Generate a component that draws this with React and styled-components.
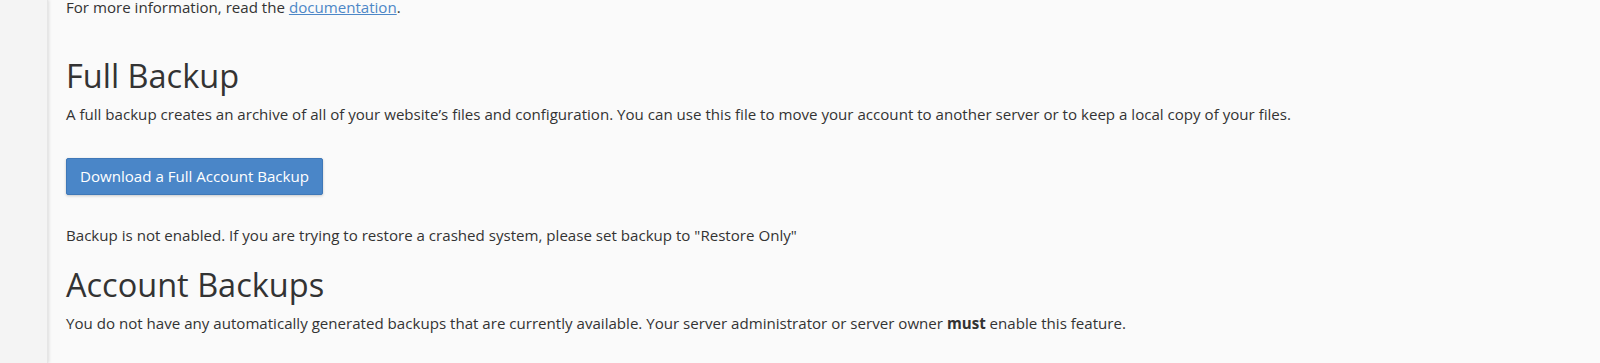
import React from 'react';
import styled, { createGlobalStyle } from 'styled-components';

const GlobalStyle = createGlobalStyle`
  html, body {
    margin: 0;
    padding: 0;
    background: #fafafa;
    font-family: "Open Sans", "Liberation Sans", sans-serif;
    font-size: 15.1px;
    color: #333;
  }
`;

const Layout = styled.div`
  display: flex;
  min-height: 363px;
  overflow: hidden;
`;

const Sidebar = styled.div`
  width: 47px;
  flex-shrink: 0;
  background: #f4f4f4;
  border-right: 1px solid #e6e6e6;
  box-shadow: 1px 0 3px rgba(0, 0, 0, 0.12);
`;

const Main = styled.main`
  flex: 1;
  padding: 0 18px;
  margin-top: -3px;
`;

const Text = styled.p`
  margin: ${p => p.$mt || 0}px 0 0;
  line-height: 21px;
`;

const Link = styled.a`
  color: #4d87c7;
  text-decoration: underline;
`;

const Heading = styled.h2`
  margin: ${p => p.$mt}px 0 0;
  font-size: 32.5px;
  font-weight: 400;
  line-height: 1.1;
  color: #333;
`;

const Button = styled.button`
  display: block;
  margin-top: 33px;
  padding: 7px 13px;
  font-family: inherit;
  font-size: 15.1px;
  line-height: 21px;
  color: #fff;
  background: #4a86c8;
  border: 1px solid #3f78b8;
  border-radius: 2px;
  box-shadow: 0 1px 3px rgba(0, 0, 0, 0.2);
  cursor: pointer;
`;

const App = () => (
  <>
    <GlobalStyle />
    <Layout>
      <Sidebar />
      <Main>
        <Text>
          For more information, read the <Link href="#">documentation</Link>.
        </Text>
        <Heading $mt={40}>Full Backup</Heading>
        <Text $mt={10}>
          A full backup creates an archive of all of your website’s files and configuration. You can use this file to move your account to another server or to keep a local copy of your files.
        </Text>
        <Button>Download a Full Account Backup</Button>
        <Text $mt={30}>
          Backup is not enabled. If you are trying to restore a crashed system, please set backup to "Restore Only"
        </Text>
        <Heading $mt={21}>Account Backups</Heading>
        <Text $mt={10}>
          You do not have any automatically generated backups that are currently available. Your server administrator or server owner <strong>must</strong> enable this feature.
        </Text>
      </Main>
    </Layout>
  </>
);

export default App;
